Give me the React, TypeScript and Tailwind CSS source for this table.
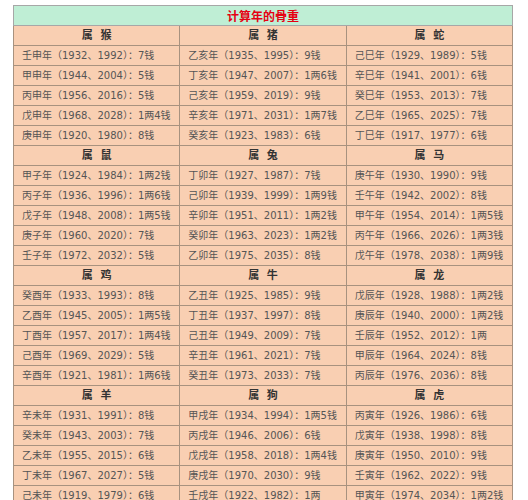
import React from "react";

type Section = { names: string[]; cols: string[][] };

const sections: Section[] = [
  {
    names: ["属 猴", "属 猪", "属 蛇"],
    cols: [
      ["壬申年（1932、1992）：7钱", "甲申年（1944、2004）：5钱", "丙申年（1956、2016）：5钱", "戊申年（1968、2028）：1两4钱", "庚申年（1920、1980）：8钱"],
      ["乙亥年（1935、1995）：9钱", "丁亥年（1947、2007）：1两6钱", "己亥年（1959、2019）：9钱", "辛亥年（1971、2031）：1两7钱", "癸亥年（1923、1983）：6钱"],
      ["己巳年（1929、1989）：5钱", "辛巳年（1941、2001）：6钱", "癸巳年（1953、2013）：7钱", "乙巳年（1965、2025）：7钱", "丁巳年（1917、1977）：6钱"],
    ],
  },
  {
    names: ["属 鼠", "属 兔", "属 马"],
    cols: [
      ["甲子年（1924、1984）：1两2钱", "丙子年（1936、1996）：1两6钱", "戊子年（1948、2008）：1两5钱", "庚子年（1960、2020）：7钱", "壬子年（1972、2032）：5钱"],
      ["丁卯年（1927、1987）：7钱", "己卯年（1939、1999）：1两9钱", "辛卯年（1951、2011）：1两2钱", "癸卯年（1963、2023）：1两2钱", "乙卯年（1975、2035）：8钱"],
      ["庚午年（1930、1990）：9钱", "壬午年（1942、2002）：8钱", "甲午年（1954、2014）：1两5钱", "丙午年（1966、2026）：1两3钱", "戊午年（1978、2038）：1两9钱"],
    ],
  },
  {
    names: ["属 鸡", "属 牛", "属 龙"],
    cols: [
      ["癸酉年（1933、1993）：8钱", "乙酉年（1945、2005）：1两5钱", "丁酉年（1957、2017）：1两4钱", "己酉年（1969、2029）：5钱", "辛酉年（1921、1981）：1两6钱"],
      ["乙丑年（1925、1985）：9钱", "丁丑年（1937、1997）：8钱", "己丑年（1949、2009）：7钱", "辛丑年（1961、2021）：7钱", "癸丑年（1973、2033）：7钱"],
      ["戊辰年（1928、1988）：1两2钱", "庚辰年（1940、2000）：1两2钱", "壬辰年（1952、2012）：1两", "甲辰年（1964、2024）：8钱", "丙辰年（1976、2036）：8钱"],
    ],
  },
  {
    names: ["属 羊", "属 狗", "属 虎"],
    cols: [
      ["辛未年（1931、1991）：8钱", "癸未年（1943、2003）：7钱", "乙未年（1955、2015）：6钱", "丁未年（1967、2027）：5钱", "己未年（1919、1979）：6钱"],
      ["甲戌年（1934、1994）：1两5钱", "丙戌年（1946、2006）：6钱", "戊戌年（1958、2018）：1两4钱", "庚戌年（1970、2030）：9钱", "壬戌年（1922、1982）：1两"],
      ["丙寅年（1926、1986）：6钱", "戊寅年（1938、1998）：8钱", "庚寅年（1950、2010）：9钱", "壬寅年（1962、2022）：9钱", "甲寅年（1974、2034）：1两2钱"],
    ],
  },
];

export default function App() {
  return (
    <div
      className="w-[528px] h-[500px] overflow-hidden bg-white pt-[5px] pl-[13px]"
      style={{ fontFamily: '"DejaVu Sans", "Noto Sans CJK SC", sans-serif' }}
    >
      <table className="w-[500px] table-fixed border-collapse border border-[#a7a7a7] text-[10px] leading-none">
        <tbody>
          <tr className="h-[20px]">
            <td
              colSpan={3}
              className="bg-[#bfeed5] text-center text-[12px] font-bold text-[#e60012] border border-[#a7a7a7]"
              style={{ fontFamily: '"Noto Sans CJK SC", sans-serif' }}
            >
              计算年的骨重
            </td>
          </tr>
          {sections.map((s, si) => (
            <React.Fragment key={si}>
              <tr className="h-[20px] bg-[#f9cfb2]">
                {s.names.map((n) => (
                  <td
                    key={n}
                    className="border border-[#a8927f] text-center font-bold text-[11px] text-[#333] whitespace-pre"
                    style={{ fontFamily: '"DejaVu Sans", "Noto Sans CJK SC", sans-serif' }}
                  >
                    {n.replace(" ", "  ")}
                  </td>
                ))}
              </tr>
              {[0, 1, 2, 3, 4].map((r) => (
                <tr key={r} className="h-[20px] bg-[#f9cfb2]">
                  {s.cols.map((c, ci) => (
                    <td key={ci} className="border border-[#a8927f] pl-[8px] text-[#555] whitespace-nowrap">
                      {c[r]}
                    </td>
                  ))}
                </tr>
              ))}
            </React.Fragment>
          ))}
        </tbody>
      </table>
    </div>
  );
}
